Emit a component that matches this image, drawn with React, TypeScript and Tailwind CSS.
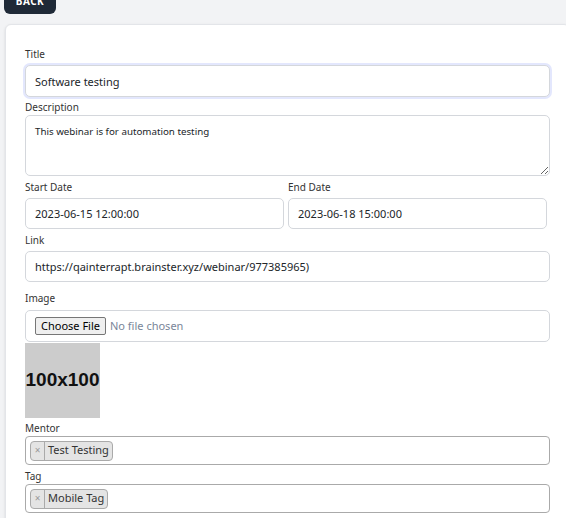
import { useEffect, useRef } from 'react'

function Label({ children, className = '' }: { children: React.ReactNode; className?: string }) {
  return <div className={`text-[10px] leading-[18px] h-4 text-[#333] ${className}`}>{children}</div>
}

const boxCls = 'block w-full rounded-[5px] border border-[#d4d7dc] bg-white px-[9px] text-[#212529] outline-none'
const inputCls = `${boxCls} text-[11px]`

function Chip({ text }: { text: string }) {
  return (
    <div className="flex h-[20px] items-stretch rounded-[4px] border border-[#aaa] bg-[#e4e4e4] text-[11px] text-[#333]">
      <span className="flex w-[14px] items-center justify-center border-r border-[#aaa] text-[10px] text-[#999]">×</span>
      <span className="flex items-center px-[3px]">{text}</span>
    </div>
  )
}

export default function App() {
  const titleRef = useRef<HTMLInputElement>(null)

  useEffect(() => {
    const el = titleRef.current
    if (el) {
      el.focus()
      el.setSelectionRange(0, 0)
    }
  }, [])

  return (
    <div className="h-[518px] w-[566px] overflow-hidden bg-[#f2f3f5] font-['Noto_Sans',sans-serif]">
      <button className="ml-[4px] mt-[-11px] flex h-[25px] w-[52px] items-center justify-center rounded-md bg-[#1f2937] text-[10px] font-bold tracking-wider text-white">
        BACK
      </button>

      <div className="ml-[5px] mt-[10px] w-[565px] rounded-md border border-[#e3e5e9] bg-white px-[19px] pt-[20px] shadow-sm">
        <Label className="mb-[4px]">Title</Label>
        <input
          ref={titleRef}
          defaultValue="Software testing"
          className={`${inputCls} h-[32px] border-[#aab5f7] shadow-[0_0_0_2px_#e3e7fd]`}
        />

        <Label className="mt-[1px] mb-[1px]">Description</Label>
        <textarea
          readOnly
          defaultValue="This webinar is for automation testing"
          className={`${boxCls} h-[61px] pt-[9px] text-[9.75px] resize-y`}
        />

        <div className="mt-[2px] flex gap-[4px]">
          <div className="w-[259px]">
            <Label className="mb-[4px]">Start Date</Label>
            <input readOnly defaultValue="2023-06-15 12:00:00" className={`${inputCls} h-[31px]`} />
          </div>
          <div className="w-[259px]">
            <Label className="mb-[4px]">End Date</Label>
            <input readOnly defaultValue="2023-06-18 15:00:00" className={`${inputCls} h-[31px]`} />
          </div>
        </div>

        <Label className="mt-[2px] mb-[4px]">Link</Label>
        <input
          readOnly
          defaultValue="https://qainterrapt.brainster.xyz/webinar/977385965)"
          className={`${inputCls} h-[31px]`}
        />

        <Label className="mt-[7px] mb-[5px]">Image</Label>
        <div className="flex h-[32px] items-center rounded-[5px] border border-[#d4d7dc] px-[9px] text-[11px]">
          <span className="flex h-[18px] items-center rounded-[2px] border border-[#767676] bg-[#efefef] px-[5px] text-black">
            Choose File
          </span>
          <span className="ml-[4px] text-[#7a8699]">No file chosen</span>
        </div>

        <div className="mt-[1px] flex h-[75px] w-[75px] items-center justify-center bg-[#cccccc] font-['Liberation_Sans',sans-serif] text-[19px] font-bold text-[#111]">
          100x100
        </div>

        <Label className="mt-[1px] mb-[1px]">Mentor</Label>
        <div className="flex h-[29px] items-center rounded-[4px] border border-[#aaa] pl-[4px]">
          <Chip text="Test Testing" />
        </div>

        <Label className="mt-[2px] mb-[1px]">Tag</Label>
        <div className="flex h-[29px] items-center rounded-[4px] border border-[#aaa] pl-[4px]">
          <Chip text="Mobile Tag" />
        </div>
        <div className="h-[20px]" />
      </div>
    </div>
  )
}
